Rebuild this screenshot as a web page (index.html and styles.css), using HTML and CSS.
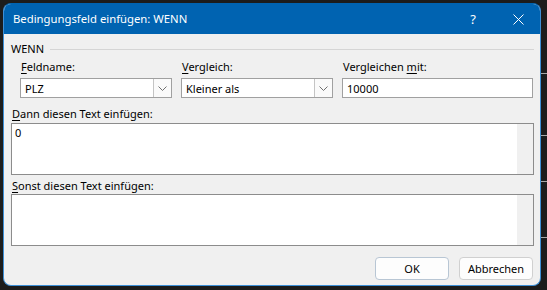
FILE: index.html
```html
<!DOCTYPE html>
<html lang="de">
<head>
<meta charset="utf-8">
<title>Bedingungsfeld einfügen: WENN</title>
<link rel="stylesheet" href="styles.css">
</head>
<body>
<div class="dialog">
  <div class="titlebar">
    <div class="title">Bedingungsfeld einfügen: WENN</div>
    <div class="tb-btn help">?</div>
    <div class="tb-btn close">
      <svg width="11" height="11" viewBox="0 0 11 11"><path d="M0.5 0.5 L10.5 10.5 M10.5 0.5 L0.5 10.5" stroke="#ffffff" stroke-width="1" fill="none"/></svg>
    </div>
  </div>
  <div class="content">
    <div class="group">
      <span class="group-label">WENN</span>
      <span class="group-line"></span>
    </div>
    <div class="fields">
      <div class="field col1">
        <div class="label"><u>F</u>eldname:</div>
        <div class="combo">
          <span class="combo-text">PLZ</span>
          <span class="combo-btn"><svg width="9" height="5" viewBox="0 0 9 5"><polyline points="0.5,0.5 4.5,4.5 8.5,0.5" stroke="#707070" stroke-width="1" fill="none"/></svg></span>
        </div>
      </div>
      <div class="field col2">
        <div class="label"><u>V</u>ergleich:</div>
        <div class="combo">
          <span class="combo-text">Kleiner als</span>
          <span class="combo-btn"><svg width="9" height="5" viewBox="0 0 9 5"><polyline points="0.5,0.5 4.5,4.5 8.5,0.5" stroke="#707070" stroke-width="1" fill="none"/></svg></span>
        </div>
      </div>
      <div class="field col3">
        <div class="label">Vergleichen <u>m</u>it:</div>
        <div class="input">10000</div>
      </div>
    </div>
    <div class="label block-label first"><u>D</u>ann diesen Text einfügen:</div>
    <div class="textarea">
      <div class="ta-text">0</div>
      <div class="ta-scroll"></div>
    </div>
    <div class="label block-label"><u>S</u>onst diesen Text einfügen:</div>
    <div class="textarea second">
      <div class="ta-text"></div>
      <div class="ta-scroll"></div>
    </div>
    <div class="buttons">
      <div class="btn default">OK</div>
      <div class="btn">Abbrechen</div>
    </div>
  </div>
</div>
<div class="edge">
  <span class="edge-line l1"></span>
  <span class="edge-line l2"></span>
  <span class="edge-line l3"></span>
  <span class="edge-line l4"></span>
</div>
</body>
</html>
```
FILE: styles.css
```css
html, body {
  margin: 0;
  height: 290px;
  overflow: hidden;
}
body {
  background: #1c1c1c;
  display: flex;
  align-items: flex-start;
  padding: 3px 0 0 3px;
  box-sizing: border-box;
  font-family: "Noto Sans", "DejaVu Sans", sans-serif;
  font-size: 11px;
  color: #000;
}
.dialog {
  width: 538px;
  height: 283px;
  box-sizing: border-box;
  border: 1px solid #3d8fd6;
  border-top-color: #0063b1;
  border-radius: 8px;
  overflow: hidden;
  background: #f0f0f0;
  display: flex;
  flex-direction: column;
  flex: none;
}
.titlebar {
  height: 30px;
  background: #0063b1;
  display: flex;
  align-items: center;
  color: #fff;
}
.title {
  flex: 1;
  padding-left: 9px;
  line-height: 30px;
  font-size: 11.3px;
}
.tb-btn {
  height: 30px;
  display: flex;
  align-items: center;
  justify-content: center;
}
.help {
  width: 46px;
  font-size: 13px;
}
.close {
  width: 44px;
}
.content {
  padding: 0 6px 0 7px;
  display: flex;
  flex-direction: column;
}
.group {
  margin-top: 8px;
  height: 14px;
  display: flex;
  align-items: center;
}
.group-label {
  line-height: 14px;
}
.group-line {
  flex: 1;
  height: 1px;
  background: #d5d5d5;
  margin-left: 6px;
}
.fields {
  display: flex;
  gap: 9px;
  margin-left: 9px;
  margin-top: 4px;
}
.col1, .col2 { width: 152px; }
.col3 { width: 191px; }
.label {
  line-height: 14px;
  height: 14px;
  padding-left: 1px;
  white-space: nowrap;
}
.label u {
  text-underline-offset: 2px;
}
.combo, .input {
  margin-top: 4px;
  height: 20px;
  box-sizing: border-box;
  border: 1px solid #a0a0a0;
  background: #fff;
  display: flex;
  align-items: center;
}
.combo-text {
  flex: 1;
  padding-left: 4px;
}
.combo-btn {
  width: 17px;
  height: 18px;
  border-left: 1px solid #c4c4c4;
  background: #fafafa;
  display: flex;
  align-items: center;
  justify-content: center;
}
.input {
  padding-left: 4px;
}
.block-label {
  padding-left: 1px;
  margin-top: 4px;
}
.block-label.first {
  margin-top: 9px;
}
.textarea {
  margin-top: 2px;
  height: 52px;
  box-sizing: border-box;
  border: 1px solid #8c8c8c;
  background: #fff;
  display: flex;
}
.textarea.second {
  margin-top: 1px;
}
.ta-text {
  flex: 1;
  padding: 1px 3px;
  line-height: 16px;
}
.ta-scroll {
  width: 16px;
  background: #f0f0f0;
}
.buttons {
  margin-top: 11px;
  display: flex;
  justify-content: flex-end;
  gap: 10px;
  padding-right: 1px;
}
.btn {
  width: 74px;
  height: 23px;
  box-sizing: border-box;
  border: 1px solid #d0d0d0;
  border-radius: 4px;
  background: #fdfdfd;
  display: flex;
  align-items: center;
  justify-content: center;
}
.btn.default {
  border-color: #b8c6d4;
}
.edge {
  width: 6px;
  margin-left: 0;
  display: flex;
  flex-direction: column;
}
.edge-line {
  height: 1px;
  background: #a8a8a8;
}
.l1 { margin-top: 70px; }
.l2 { margin-top: 61px; }
.l3 { margin-top: 45px; }
.l4 { margin-top: 55px; }
```
